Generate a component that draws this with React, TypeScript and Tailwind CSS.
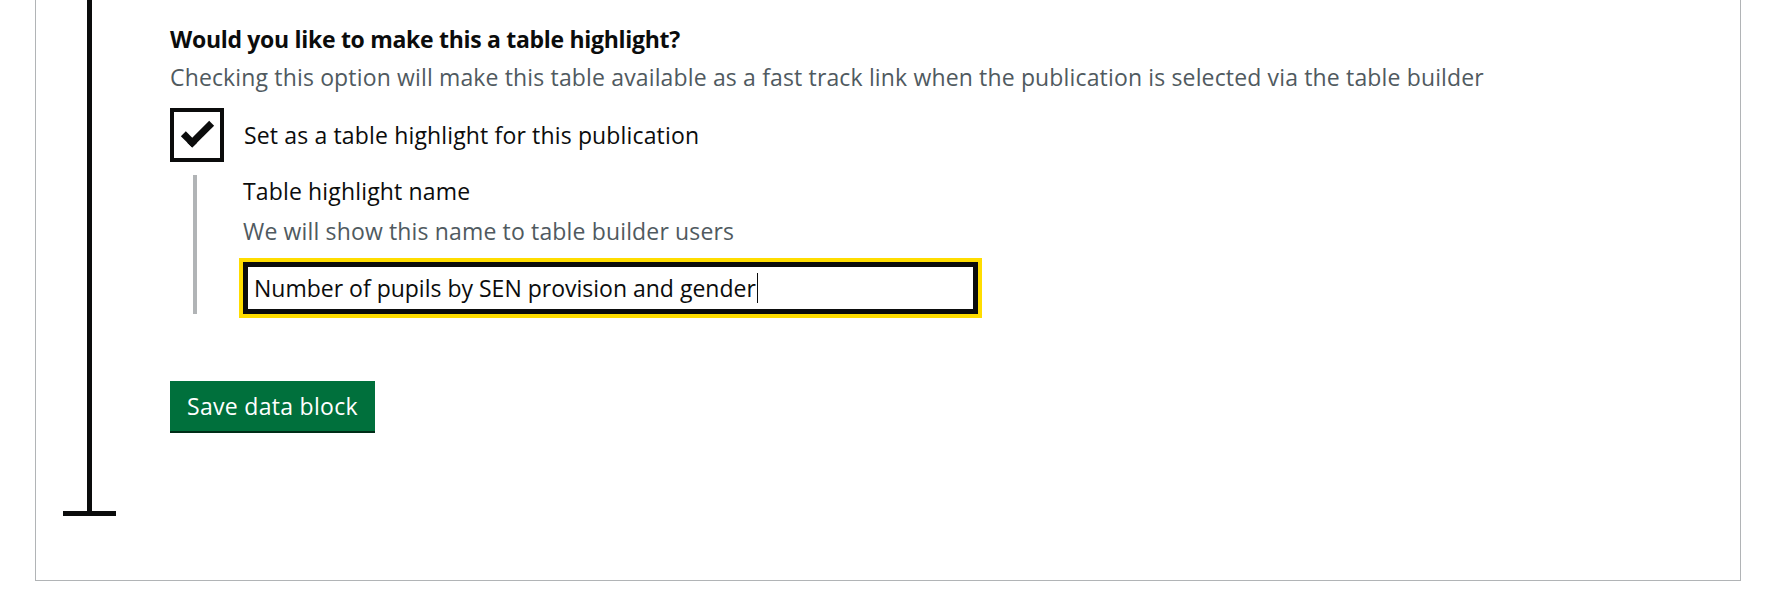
export default function App() {
  return (
    <div className="min-h-[602px] bg-white pr-[32px] pl-[35px] font-['Open_Sans',sans-serif] text-[23px] leading-[30px] tracking-[0.15px] text-[#0b0c0c]">
      <div className="flex border-x border-b border-[#b1b4b6] pb-[64px]">
        {/* Timeline */}
        <div className="ml-[27px] flex h-[516px] w-[53px] shrink-0 flex-col items-center">
          <div className="w-[5px] flex-1 bg-[#0b0c0c]" />
          <div className="h-[5px] w-full bg-[#0b0c0c]" />
        </div>

        <div className="ml-[54px] flex flex-col items-start pt-[24px]">
          <h3 className="font-bold tracking-[-0.3px]">Would you like to make this a table highlight?</h3>
          <p className="mt-[8px] text-[#505a5f]">
            Checking this option will make this table available as a fast track link when the publication is selected via the table builder
          </p>

          <label className="mt-[16px] flex items-center gap-[20px]">
            <span className="relative h-[54px] w-[54px] shrink-0 border-[4px] border-[#0b0c0c] bg-white">
              <span className="absolute top-[11px] left-[8px] h-[16px] w-[31px] -rotate-45 border-b-[7px] border-l-[7px] border-[#0b0c0c]" />
            </span>
            <span>Set as a table highlight for this publication</span>
          </label>

          <div className="mt-[13px] ml-[23px] border-l-4 border-[#b1b4b6] pl-[46px]">
            <div className="pt-px">Table highlight name</div>
            <div className="mt-[10px] text-[#505a5f]">We will show this name to table builder users</div>
            <div className="mt-[16px] flex h-[52px] w-[735px] items-center border-[5px] border-[#0b0c0c] bg-white pl-[6px] tracking-normal ring-4 ring-[#ffdd00]">
              <span>Number of pupils by SEN provision and gender</span>
              <span className="ml-px inline-block h-[30px] w-px bg-[#0b0c0c]" />
            </div>
          </div>

          <button
            type="button"
            className="mt-[67px] h-[50px] bg-[#00703c] px-[17px] text-[23px] leading-[30px] tracking-[0.3px] text-white shadow-[0_2px_0_#002d18]"
          >
            Save data block
          </button>
        </div>
      </div>
    </div>
  );
}
